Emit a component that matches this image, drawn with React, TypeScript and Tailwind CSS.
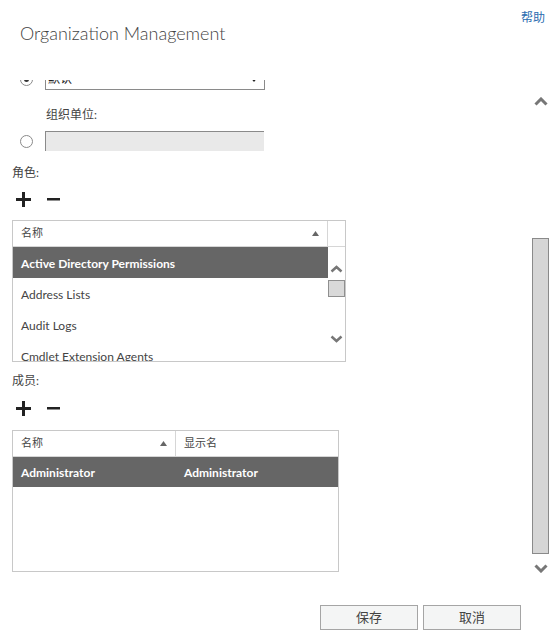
import React from "react";

const Radio = ({ checked }: { checked?: boolean }) => (
  <div className="w-[13px] h-[13px] rounded-full border border-[#8a8a8a] bg-white flex items-center justify-center shrink-0">
    {checked && <div className="w-[5px] h-[5px] rounded-full bg-[#333]" />}
  </div>
);

const Chevron = ({ up, w = 14, h = 9, sw = 3 }: { up?: boolean; w?: number; h?: number; sw?: number }) => (
  <svg width={w} height={h} viewBox={`0 0 ${w} ${h}`}>
    {up ? (
      <polyline points={`1.5,${h - 1.5} ${w / 2},2 ${w - 1.5},${h - 1.5}`} fill="none" stroke="#777" strokeWidth={sw} />
    ) : (
      <polyline points={`1.5,1.5 ${w / 2},${h - 2} ${w - 1.5},1.5`} fill="none" stroke="#777" strokeWidth={sw} />
    )}
  </svg>
);

const Tri = () => (
  <svg width="7" height="5" viewBox="0 0 7 5">
    <polygon points="0,5 3.5,0 7,5" fill="#666" />
  </svg>
);

const PlusMinus = () => (
  <div className="flex items-center h-[16px] pl-[16px] gap-[16px]">
    <svg width="15" height="15" viewBox="0 0 15 15">
      <rect x="0" y="6" width="15" height="3" fill="#222" />
      <rect x="6" y="0" width="3" height="15" fill="#222" />
    </svg>
    <svg width="13" height="15" viewBox="0 0 13 15">
      <rect x="0" y="6" width="13" height="2.5" fill="#222" />
    </svg>
  </div>
);

export default function App() {
  const rows = ["Active Directory Permissions", "Address Lists", "Audit Logs", "Cmdlet Extension Agents"];
  return (
    <div className="w-[554px] h-[638px] bg-white flex flex-col font-['Lato','Noto_Sans_CJK_SC',sans-serif] text-[#444] overflow-hidden">
      {/* header */}
      <div className="h-[80px] shrink-0 flex justify-between">
        <div className="pl-[20px] pt-[21px] text-[18px] leading-[24px] font-light text-[#444]">Organization Management</div>
        <div className="pt-[10px] pr-[9px] text-[12px] leading-[16px] text-[#2a6db0]">帮助</div>
      </div>

      {/* main */}
      <div className="flex-1 flex min-h-0">
        <div className="flex-1 overflow-hidden">
          <div className="-mt-[12px] flex flex-col">
            {/* dropdown row */}
            <div className="flex items-center pl-[20px] gap-[12px] h-[22px]">
              <Radio checked />
              <div className="w-[220px] h-[22px] border border-[#8a8a8a] bg-white flex items-center justify-between pl-[2px] pr-[6px] text-[12px] text-[#222]">
                <span>默认</span>
                <svg width="8" height="5" viewBox="0 0 8 5"><polygon points="0,0 8,0 4,5" fill="#222" /></svg>
              </div>
            </div>
            <div className="mt-[17px] pl-[46px] text-[12px] leading-[16px]">组织单位:</div>
            <div className="mt-[8px] flex items-center pl-[20px] gap-[12px] h-[20px]">
              <Radio />
              <div className="w-[219px] h-[20px] bg-[#e9e9e9] border-t border-l border-[#8a8a8a]" />
            </div>

            <div className="mt-[14px] pl-[12px] text-[12px] leading-[16px]">角色:</div>
            <div className="mt-[10px]"><PlusMinus /></div>

            {/* roles table */}
            <div className="mt-[13px] ml-[12px] w-[334px] h-[142px] border border-[#c8c8c8] flex flex-col overflow-hidden">
              <div className="flex h-[26px] shrink-0 border-b border-[#d6d6d6]">
                <div className="flex-1 flex items-center justify-between pl-[8px] pr-[8px] border-r border-[#d6d6d6] text-[11px]">
                  <span>名称</span>
                  <Tri />
                </div>
                <div className="w-[17px]" />
              </div>
              <div className="flex flex-1 min-h-0">
                <div className="flex-1 flex flex-col">
                  {rows.map((r, i) => (
                    <div
                      key={r}
                      className={
                        i === 0
                          ? "h-[31px] shrink-0 flex items-center pt-[2px] pl-[8px] bg-[#666] text-white font-bold text-[12px]"
                          : "h-[31px] shrink-0 flex items-center pt-[2px] pl-[8px] text-[#444] text-[12px]"
                      }
                    >
                      {r}
                    </div>
                  ))}
                </div>
                <div className="w-[17px] flex flex-col items-center">
                  <div className="mt-[17px] h-[10px] flex items-center"><Chevron up w={13} h={8} sw={2.5} /></div>
                  <div className="mt-[6px] w-[17px] h-[17px] bg-[#d9d9d9] border border-[#8f8f8f]" />
                  <div className="mt-[37px] h-[10px] flex items-center"><Chevron w={13} h={8} sw={2.5} /></div>
                </div>
              </div>
            </div>

            <div className="mt-[11px] pl-[12px] text-[12px] leading-[16px]">成员:</div>
            <div className="mt-[11px]"><PlusMinus /></div>

            {/* members table */}
            <div className="mt-[14px] ml-[12px] w-[327px] h-[142px] border border-[#c8c8c8] flex flex-col overflow-hidden">
              <div className="flex h-[26px] shrink-0 border-b border-[#d6d6d6] text-[11px]">
                <div className="w-[163px] flex items-center justify-between pl-[8px] pr-[8px] border-r border-[#d6d6d6]">
                  <span>名称</span>
                  <Tri />
                </div>
                <div className="flex-1 flex items-center pl-[8px]">显示名</div>
              </div>
              <div className="flex h-[30px] shrink-0 bg-[#666] text-white font-bold text-[12px] pt-[2px]">
                <div className="w-[163px] flex items-center pl-[8px]">Administrator</div>
                <div className="flex-1 flex items-center pl-[8px]">Administrator</div>
              </div>
            </div>
          </div>
        </div>

        {/* page scrollbar */}
        <div className="w-[17px] mr-[5px] flex flex-col items-center">
          <div className="mt-[16px] h-[10px] flex items-center"><Chevron up w={14} h={9} sw={3} /></div>
          <div className="mt-[132px] w-[17px] h-[316px] bg-[#d6d6d6] border border-[#8a8a8a]" />
          <div className="mt-[9px] h-[10px] flex items-center"><Chevron w={14} h={9} sw={3} /></div>
        </div>
      </div>

      {/* footer */}
      <div className="h-[48px] shrink-0 flex justify-end items-start pt-[15px] pr-[33px] gap-[5px]">
        <button className="w-[98px] h-[25px] bg-[#f4f5f5] border border-[#a5a5a5] text-[13px] text-[#444]">保存</button>
        <button className="w-[98px] h-[25px] bg-[#f4f5f5] border border-[#a5a5a5] text-[13px] text-[#444]">取消</button>
      </div>
    </div>
  );
}
